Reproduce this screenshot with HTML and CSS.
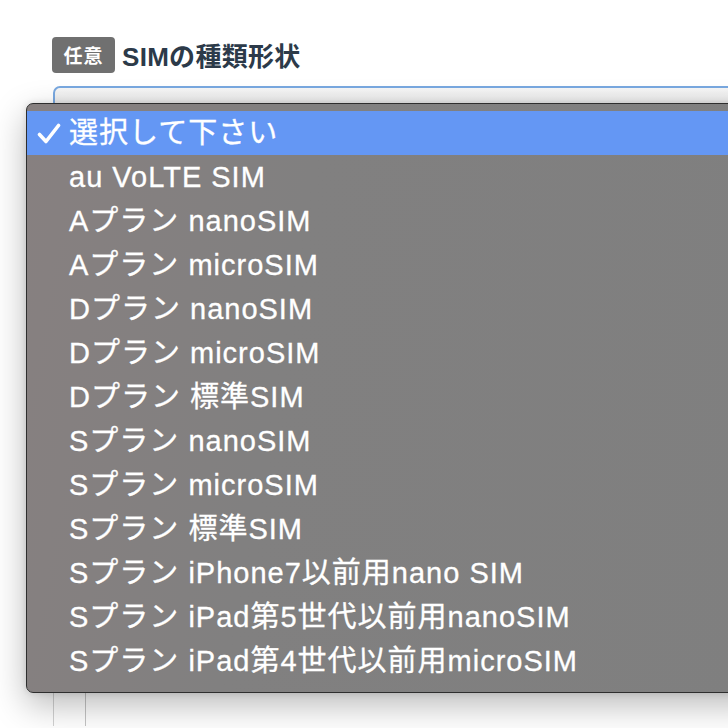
FILE: index.html
```html
<!DOCTYPE html>
<html lang="ja">
<head>
<meta charset="utf-8">
<title>SIMの種類形状</title>
<link rel="stylesheet" href="styles.css">
</head>
<body>
<div class="page">
  <div class="label-row">
    <span class="badge">任意</span>
    <span class="title">SIMの種類形状</span>
  </div>
  <div class="field-area">
    <div class="select-box"></div>
    <div class="below">
      <div class="inner-col"></div>
    </div>
  </div>
</div>
<div class="menu">
  <div class="item selected">
    <svg class="check" width="24" height="22" viewBox="0 0 24 22"><path d="M2.5 11.5 L9 18.5 L21.5 2.5" fill="none" stroke="#fff" stroke-width="3.6" stroke-linecap="round" stroke-linejoin="round"/></svg>
    選択して下さい
  </div>
  <div class="item">au VoLTE SIM</div>
  <div class="item">Aプラン nanoSIM</div>
  <div class="item">Aプラン microSIM</div>
  <div class="item">Dプラン nanoSIM</div>
  <div class="item">Dプラン microSIM</div>
  <div class="item">Dプラン 標準SIM</div>
  <div class="item">Sプラン nanoSIM</div>
  <div class="item">Sプラン microSIM</div>
  <div class="item">Sプラン 標準SIM</div>
  <div class="item">Sプラン iPhone7以前用nano SIM</div>
  <div class="item">Sプラン iPad第5世代以前用nanoSIM</div>
  <div class="item">Sプラン iPad第4世代以前用microSIM</div>
</div>
</body>
</html>
```
FILE: styles.css
```css
html, body {
  margin: 0;
  padding: 0;
  width: 728px;
  height: 728px;
  overflow: hidden;
  background: #ffffff;
}
body {
  position: relative;
  font-family: "Liberation Sans", "Noto Sans CJK JP", sans-serif;
}
.page {
  padding: 36px 0 0 52px;
}
.label-row {
  display: flex;
  align-items: center;
  gap: 7px;
}
.badge {
  display: flex;
  align-items: center;
  justify-content: center;
  width: 63px;
  height: 36px;
  box-sizing: border-box;
  background: #707070;
  color: #ffffff;
  font-weight: bold;
  font-size: 19px;
  letter-spacing: 1px;
  border-radius: 4px;
}
.title {
  font-weight: bold;
  font-size: 26px;
  letter-spacing: 0.3px;
  color: #2c3a49;
}
.field-area {
  margin-top: 13px;
  margin-left: 1px;
}
.select-box {
  height: 40px;
  width: 760px;
  box-sizing: border-box;
  border: 2px solid #79a8e0;
  border-radius: 7px;
  background: linear-gradient(#f6f6f6, #dcdcdc);
}
.below {
  height: 600px;
  border-left: 1px solid #d2d2d2;
  padding-left: 31px;
}
.inner-col {
  height: 100%;
  border-left: 1px solid #c4c4c4;
}
.menu {
  position: absolute;
  left: 26px;
  top: 103px;
  width: 740px;
  box-sizing: border-box;
  padding: 7px 0 9px;
  border: 1px solid #2e2e2e;
  border-radius: 7px;
  background: linear-gradient(100deg, #878080 0%, #818080 35%, #7f7f7f 100%);
  box-shadow: 0 12px 34px rgba(0, 0, 0, 0.28), 0 0 6px rgba(0, 0, 0, 0.12);
}
.item {
  position: relative;
  height: 44px;
  line-height: 44px;
  padding-left: 42px;
  color: #ffffff;
  font-size: 29px;
  letter-spacing: 1px;
  white-space: nowrap;
  -webkit-text-stroke: 0.3px #ffffff;
}
.item.selected {
  background: #6497f4;
}
.check {
  position: absolute;
  left: 10px;
  top: 12px;
}
```
